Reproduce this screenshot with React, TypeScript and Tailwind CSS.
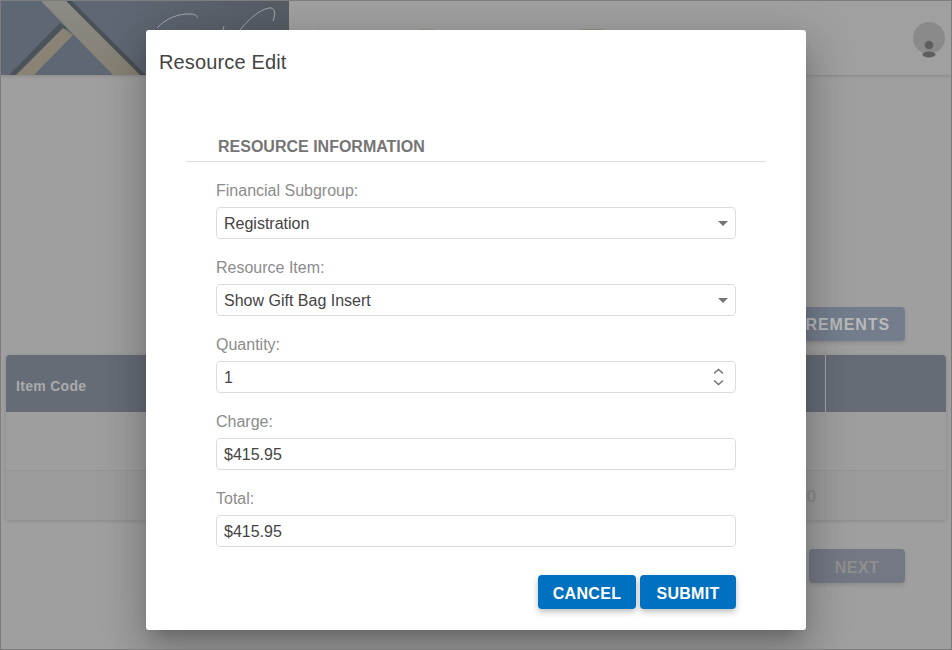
const fields = [
  { label: "Financial Subgroup:", value: "Registration", kind: "select" },
  { label: "Resource Item:", value: "Show Gift Bag Insert", kind: "select" },
  { label: "Quantity:", value: "1", kind: "number" },
  { label: "Charge:", value: "$415.95", kind: "text" },
  { label: "Total:", value: "$415.95", kind: "text" },
];

function Banner() {
  return (
    <svg width="288" height="74" viewBox="0 0 288 74" className="block shrink-0">
      <defs>
        <linearGradient id="banner" x1="0" y1="0" x2="1" y2="0">
          <stop offset="0" stopColor="#5e6874" />
          <stop offset="0.45" stopColor="#5e6773" />
          <stop offset="1" stopColor="#565c64" />
        </linearGradient>
        <linearGradient id="beam" x1="0" y1="0" x2="0" y2="1">
          <stop offset="0" stopColor="#8c8c86" />
          <stop offset="0.4" stopColor="#88867d" />
          <stop offset="1" stopColor="#878073" />
        </linearGradient>
      </defs>
      <rect width="288" height="74" fill="url(#banner)" />
      <polygon points="59,22 66,27 27,74 8,74" fill="#4c5259" />
      <polygon points="62,27 72,34 33,74 15,74" fill="#8a8375" />
      <polygon points="65,0 71,0 145,74 138,74" fill="#4a5057" />
      <polygon points="40,0 65,0 139,74 112,74" fill="url(#beam)" />
      <g fill="none" stroke="#a4a8ac" strokeWidth="1">
        <path d="M156 27C164 18 178 12 190 13C194 13 196 15 197 17" />
        <path d="M239 29C248 18 258 9 268 7C274 6 275 12 272 20" />
        <path d="M223 25L222 29" />
      </g>
    </svg>
  );
}

function Field({ label, value, kind }: { label: string; value: string; kind: string }) {
  return (
    <div className="flex flex-col gap-[6px]">
      <label className="pt-px text-base leading-5 text-[#8c8c8c]">{label}</label>
      <div className="relative h-8 rounded-sm border border-[#dcdcdc] bg-white">
        <input
          readOnly
          value={value}
          className="h-full w-full bg-transparent pl-[7px] pr-8 pt-[2px] text-base text-[#444444] outline-none"
        />
        {kind === "select" && (
          <svg width="10" height="5" viewBox="0 0 10 5" className="absolute right-[7.5px] top-[13px]">
            <polygon points="0,0 10,0 5,5" fill="#757575" />
          </svg>
        )}
        {kind === "number" && (
          <svg
            width="11"
            height="20"
            viewBox="0 0 11 20"
            fill="none"
            stroke="#6f6f6f"
            strokeWidth="1.4"
            className="absolute right-[11px] top-[5px]"
          >
            <path d="M1 6.5L5.5 2.5L10 6.5" />
            <path d="M1 13.5L5.5 17.5L10 13.5" />
          </svg>
        )}
      </div>
    </div>
  );
}

export default function App() {
  return (
    <div className="relative h-[650px] w-[952px] overflow-hidden border border-[#7d7d7d] bg-[#9f9f9f] font-['Liberation_Sans',Arial,sans-serif]">
      <header className="flex h-[74px] justify-between bg-[#a0a0a0] shadow-[0_1px_3px_rgba(0,0,0,0.15)]">
        <div className="flex">
          <Banner />
          <div className="flex items-start gap-[100px] pt-[28px]">
            <span className="ml-[28px] h-px w-[2px] bg-[#9a9287]" />
            <span className="h-px w-[16px] bg-[#9a9287]" />
            <span className="ml-[46px] h-px w-[24px] bg-[#978d80]" />
          </div>
        </div>
        <svg width="32" height="36" viewBox="0 0 32 36" className="mr-[6px] mt-[21px]">
          <circle cx="16" cy="16" r="16" fill="#8a8a8a" />
          <circle cx="16" cy="23" r="4.3" fill="#5e5e5e" />
          <ellipse cx="16" cy="32.5" rx="6.5" ry="3" fill="#5e5e5e" />
        </svg>
      </header>

      <main className="flex flex-col">
        <div className="flex justify-end pr-[46px] pt-[232px]">
          <button className="h-[34px] w-[300px] rounded bg-[#747d8c] pr-[15px] pt-[2px] text-right text-base font-bold tracking-[0.9px] text-[#b9b9b9] shadow-[0_2px_4px_rgba(0,0,0,0.12)]">
            REQUIREMENTS
          </button>
        </div>

        <div className="mx-[5px] mt-[14px] overflow-hidden rounded bg-[#9e9e9e] shadow-[0_1px_4px_rgba(0,0,0,0.14)]">
          <div className="flex h-[57px] bg-[#666c76] text-sm font-bold tracking-[0.3px] text-[#aaaaaa]">
            <div className="flex flex-1 items-center border-r border-[#a5a5a5] pl-[10px] pt-[5px]">Item Code</div>
            <div className="w-[120px]" />
          </div>
          <div className="h-[59px] border-b border-[#959595]" />
          <div className="flex h-[49px] items-center bg-[#9b9b9b] pt-[2px] text-base text-[#858585]">
            <div className="flex-1 pr-[10px] text-right">$415.90</div>
            <div className="w-[120px]" />
          </div>
        </div>

        <div className="flex justify-end pr-[46px] pt-[29px]">
          <button className="h-[34px] w-[96px] rounded bg-[#737884] pt-[3px] text-base font-bold tracking-[0.5px] text-[#8f8f8f] shadow-[0_2px_4px_rgba(0,0,0,0.12)]">
            NEXT
          </button>
        </div>
      </main>

      {/* dialog sits over the page, so it is the one thing placed by offset */}
      <div className="absolute left-[145px] top-[29px] flex h-[600px] w-[660px] flex-col rounded-[3px] bg-white shadow-[0_11px_15px_-7px_rgba(0,0,0,0.2),0_24px_38px_3px_rgba(0,0,0,0.14),0_9px_46px_8px_rgba(0,0,0,0.12)]">
        <h2 className="pl-[13px] pt-5 text-xl leading-6 tracking-[0.15px] text-[#444444]">Resource Edit</h2>

        <div className="mx-[40px] mt-[63px] border-b border-[#dcdcdc] pb-[4px] pl-[32px] text-base font-bold leading-5 text-[#757575]">
          RESOURCE INFORMATION
        </div>

        <div className="ml-[70px] mt-[18px] flex w-[520px] flex-col gap-[18px]">
          {fields.map((f) => (
            <Field key={f.label} {...f} />
          ))}
        </div>

        <div className="ml-[70px] mt-7 flex w-[520px] justify-end gap-1">
          <button className="h-[34px] w-[98px] rounded bg-[#0070c0] pt-[3px] text-base font-bold tracking-[0.3px] text-white shadow-[0_3px_6px_rgba(0,0,0,0.25)]">
            CANCEL
          </button>
          <button className="h-[34px] w-[96px] rounded bg-[#0070c0] pt-[3px] text-base font-bold tracking-[0.3px] text-white shadow-[0_3px_6px_rgba(0,0,0,0.25)]">
            SUBMIT
          </button>
        </div>
      </div>
    </div>
  );
}
